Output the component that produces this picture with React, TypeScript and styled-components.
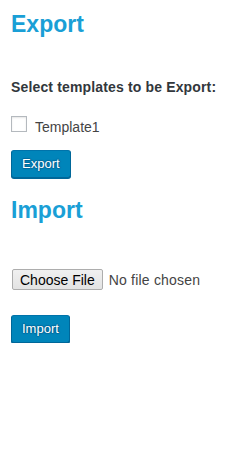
import React from "react";
import styled, { createGlobalStyle } from "styled-components";

const Global = createGlobalStyle`
  html, body { margin: 0; padding: 0; background: #fff; overflow: hidden; }
  body { font-family: "Liberation Sans", Arial, sans-serif; color: #444; }
`;

const Page = styled.div`
  display: flex;
  flex-direction: column;
  align-items: flex-start;
  padding: 10px 11px 0;
`;

const SectionTitle = styled.h2<{ $mt?: number }>`
  margin: ${(p) => p.$mt ?? 0}px 0 0;
  font-size: 23px;
  line-height: 28px;
  font-weight: 700;
  color: #1a9fd6;
`;

const FieldLabel = styled.div`
  margin-top: 40px;
  font-size: 14px;
  line-height: 18px;
  font-weight: 700;
  letter-spacing: 0.15px;
  color: #32373c;
`;

const CheckRow = styled.label`
  margin-top: 20px;
  display: flex;
  align-items: flex-start;
  gap: 8px;
  cursor: pointer;
`;

const Check = styled.input`
  appearance: none;
  margin: 0;
  width: 16px;
  height: 16px;
  box-sizing: border-box;
  border: 1px solid #b4b9be;
  background: #fff;
  box-shadow: inset 0 1px 2px rgba(0, 0, 0, 0.1);
`;

const CheckText = styled.span`
  margin-top: 3px;
  font-size: 14px;
  line-height: 16px;
  color: #444;
`;

const PrimaryButton = styled.button<{ $mt: number }>`
  margin-top: ${(p) => p.$mt}px;
  box-sizing: border-box;
  height: 28px;
  padding: 0 10px 1px;
  line-height: 26px;
  font-family: "Liberation Sans", Arial, sans-serif;
  font-size: 13px;
  color: #fff;
  background: #0085ba;
  border: 1px solid;
  border-color: #0073aa #006799 #006799;
  border-radius: 3px;
  box-shadow: 0 1px 0 #006799;
  text-shadow: 0 -1px 1px #006799, 1px 0 1px #006799, 0 1px 1px #006799,
    -1px 0 1px #006799;
  cursor: pointer;
`;

const FileInput = styled.input`
  margin: 45px 0 0 1px;
  display: block;
  width: 210px;
  height: 21px;
  font-family: "Liberation Sans", Arial, sans-serif;
  font-size: 14px;
  letter-spacing: 0.2px;
  color: #444;

  &::file-selector-button {
    box-sizing: border-box;
    height: 21px;
    margin: 0 6px 0 0;
    padding: 0 7px;
    font-family: "Liberation Sans", Arial, sans-serif;
    font-size: 14px;
    letter-spacing: 0;
    color: #000;
    background: linear-gradient(#f0f0f0, #e3e3e3);
    border: 1px solid #adadad;
    border-radius: 2px;
  }
`;

export default function App() {
  return (
    <>
      <Global />
      <Page>
        <SectionTitle>Export</SectionTitle>
        <FieldLabel>Select templates to be Export:</FieldLabel>
        <CheckRow>
          <Check type="checkbox" />
          <CheckText>Template1</CheckText>
        </CheckRow>
        <PrimaryButton $mt={15}>Export</PrimaryButton>
        <SectionTitle $mt={18}>Import</SectionTitle>
        <FileInput type="file" />
        <PrimaryButton $mt={25}>Import</PrimaryButton>
      </Page>
    </>
  );
}
